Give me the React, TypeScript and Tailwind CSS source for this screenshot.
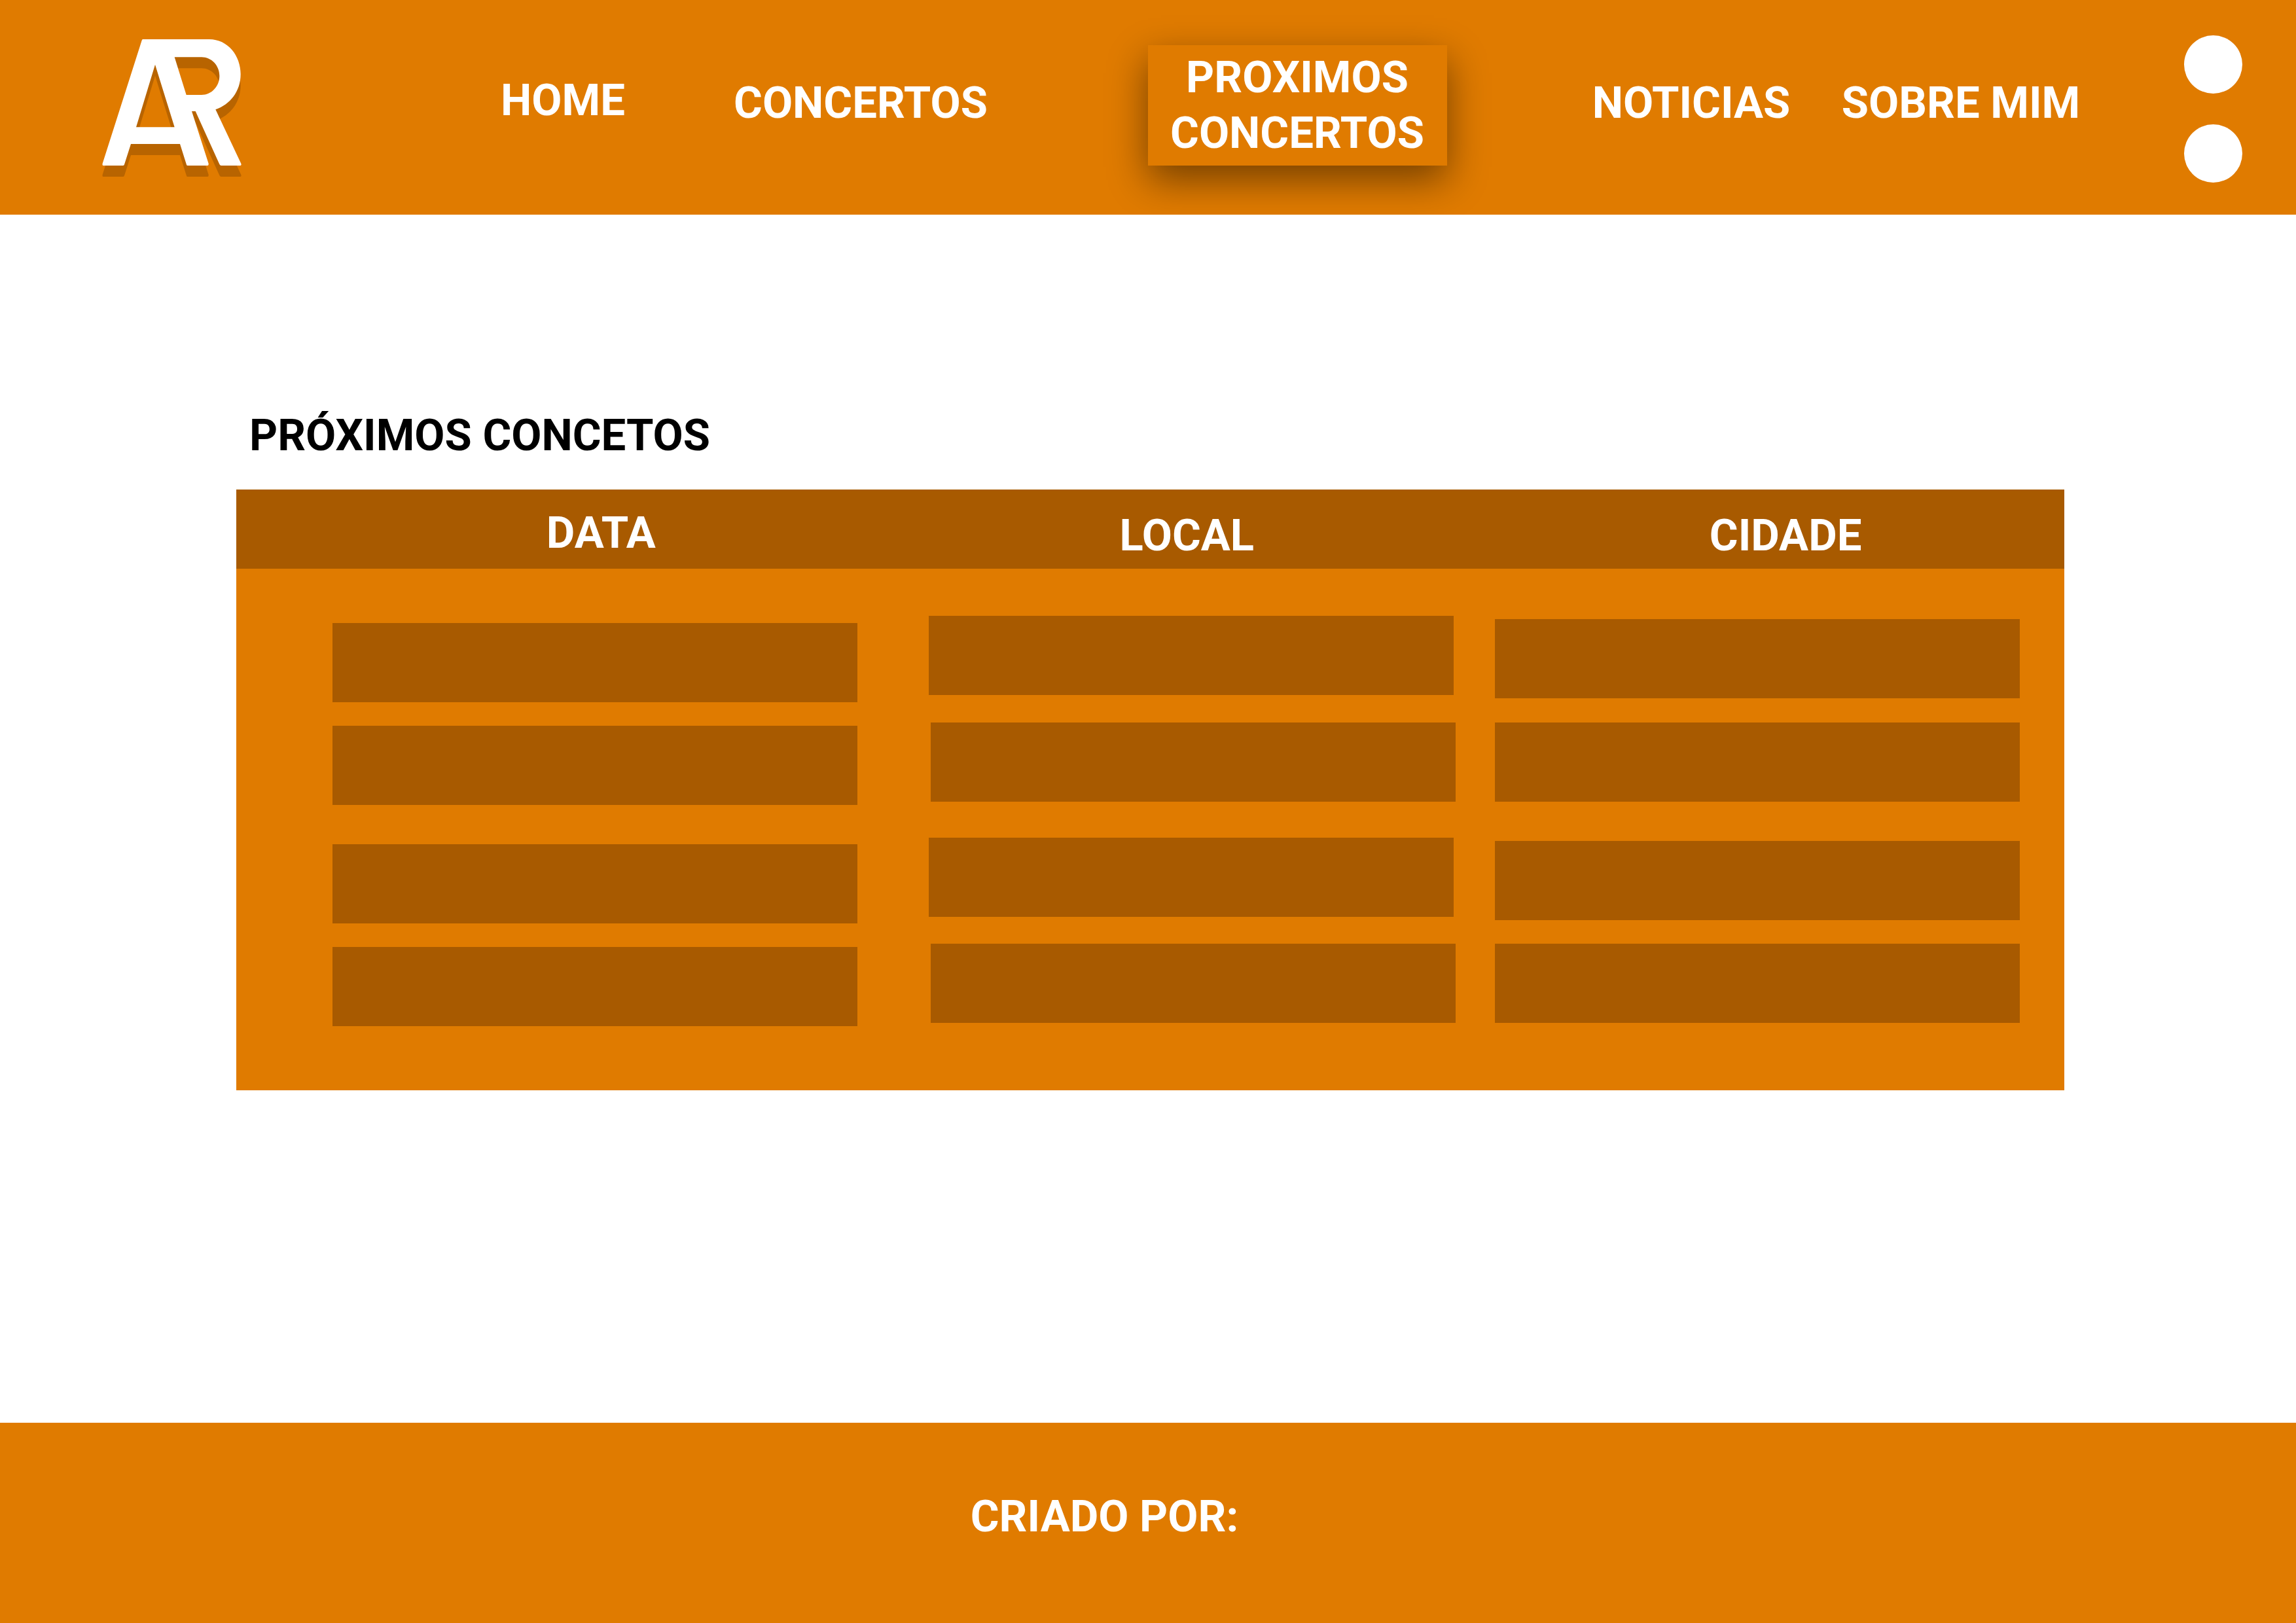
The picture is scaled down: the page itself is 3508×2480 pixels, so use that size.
type NavItem = { label: string; box: string };

const navItems: NavItem[] = [
  { label: "HOME", box: "pb-[22px]" },
  { label: "CONCERTOS", box: "pb-[14px]" },
  { label: "PROXIMOS CONCERTOS", box: "pb-[7px]" },
  { label: "NOTICIAS", box: "pb-[14px]" },
  { label: "SOBRE MIM", box: "pb-[14px]" },
];

const activeItem = "PROXIMOS CONCERTOS";

const columns = [
  { label: "DATA", head: "pl-[109px] pt-6 pb-3", width: "w-[36%]" },
  { label: "LOCAL", head: "pt-7 pb-2", width: "w-[32%]" },
  { label: "CIDADE", head: "pl-[42px] pt-7 pb-2", width: "w-[32%]" },
];

const rows = [
  ["pl-[147px] pr-14 pt-[83px]", "pl-[53px] pr-[39px] pt-[72px]", "pl-6 pr-[68px] pt-[77px]"],
  ["pl-[147px] pr-14 pt-9", "pl-14 pr-9 pt-[31px]", "pl-6 pr-[68px] pt-[31px]"],
  ["pl-[147px] pr-14 pt-[60px]", "pl-[53px] pr-[39px] pt-[50px]", "pl-6 pr-[68px] pt-[55px]"],
  ["pl-[147px] pr-14 pt-9", "pl-14 pr-9 pt-[31px]", "pl-6 pr-[68px] pt-[31px]"],
];

const mark =
  "M266 90H570C655 90 714 165 714 250C714 330 665 390 599 412L716 660Q719 669 711 669H625Q620 669 617 663L507 420H490L567 660Q568 669 562 669H471Q467 669 466 665L436 570H211L181 664Q180 669 175 669H85Q79 669 81 659L261 95Q262 90 266 90ZM322 206L235 493H411ZM411 172H535C580 172 617 210 617 258C617 307 580 345 535 345H465Z";

function Logo() {
  return (
    <svg viewBox="79 90 639 630" className="h-[210px] w-[213px]" role="img" aria-label="AR">
      <path d={mark} fill="#b86400" fillRule="evenodd" transform="translate(0 51)" />
      <path d={mark} fill="#ffffff" fillRule="evenodd" />
    </svg>
  );
}

function Header() {
  return (
    <header className="grid h-[328px] grid-cols-[632fr_456fr_454fr_880fr_324fr_500fr_262fr] items-center overflow-hidden bg-[#e07b00] text-white">
      <a href="#inicio" className="mt-0.5 ml-[156px] w-fit">
        <Logo />
      </a>
      <nav className="contents">
        {navItems.map((item) => (
          <div key={item.label} className={`flex justify-center ${item.box}`}>
            {item.label === activeItem ? (
              <a
                href="#proximos"
                aria-current="page"
                className="w-[457px] bg-[#e07b00] px-6 py-[7px] text-center shadow-[0_22px_56px_rgba(0,0,0,0.48)]"
              >
                {item.label}
              </a>
            ) : (
              <a href={`#${item.label.toLowerCase().replace(" ", "-")}`} className="whitespace-nowrap">
                {item.label}
              </a>
            )}
          </div>
        ))}
      </nav>
      <button type="button" aria-label="Menu" className="mt-1 ml-[91px] flex w-fit flex-col gap-[47px]">
        <span className="size-[89px] rounded-full bg-white" />
        <span className="size-[89px] rounded-full bg-white" />
      </button>
    </header>
  );
}

function ConcertTable() {
  return (
    <table aria-labelledby="titulo" className="w-full table-fixed border-collapse bg-[#e07b00]">
      <thead className="bg-[#a85a00] text-white">
        <tr>
          {columns.map((c) => (
            <th key={c.label} scope="col" className={`text-center font-bold ${c.width} ${c.head}`}>
              {c.label}
            </th>
          ))}
        </tr>
      </thead>
      <tbody>
        {rows.map((cells, r) => (
          <tr key={r}>
            {cells.map((cell, c) => (
              <td key={c} className={`align-top ${cell}`}>
                <div className="h-[121px] bg-[#a85a00]" />
              </td>
            ))}
          </tr>
        ))}
      </tbody>
      <tfoot>
        <tr>
          <td colSpan={3} className="h-[98px]" />
        </tr>
      </tfoot>
    </table>
  );
}

export default function App() {
  return (
    <div className="flex min-h-screen flex-col bg-white font-['Roboto',sans-serif] text-[67px] leading-[85px] font-bold">
      <Header />
      <main className="flex-1 pt-[295px] pr-[354px] pb-20 pl-[361px]">
        <h1 id="titulo" className="mb-10 pl-5 text-black">
          PRÓXIMOS CONCETOS
        </h1>
        <ConcertTable />
      </main>
      <footer className="bg-[#e07b00] pt-[101px] pr-[133px] pb-[120px] text-center text-white">
        CRIADO POR:
      </footer>
    </div>
  );
}
